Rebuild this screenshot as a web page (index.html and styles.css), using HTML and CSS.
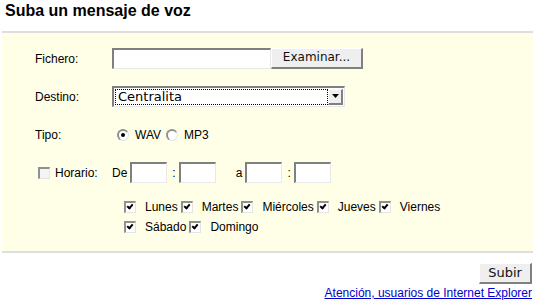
FILE: index.html
```html
<!DOCTYPE html>
<html lang="es">
<head>
    <meta charset="UTF-8">
    <title>Suba un mensaje de voz</title>
    <link rel="stylesheet" href="styles.css">
</head>
<body>
    <h1 class="title">Suba un mensaje de voz</h1>

    <div class="panel">
        <div class="row">
            <span class="label">Fichero:</span>
            <span class="field file"></span>
            <span class="btn">Examinar...</span>
        </div>

        <div class="row">
            <span class="label">Destino:</span>
            <div class="select">
                <span class="select-text">Centralita</span>
                <span class="select-arrow">
                    <svg width="9" height="5" viewBox="0 0 9 5"><path d="M1 0h7L4.5 4z" fill="#000"/></svg>
                </span>
            </div>
        </div>

        <div class="row">
            <span class="label">Tipo:</span>
            <div class="choices">
                <span class="radio on"></span><span class="opt">WAV</span>
                <span class="radio"></span><span class="opt">MP3</span>
            </div>
        </div>

        <div class="row">
            <span class="label label-check"><span class="check"></span>Horario:</span>
            <div class="times">
                <span class="word">De</span>
                <span class="field time"></span>
                <span class="sep">:</span>
                <span class="field time"></span>
                <span class="word word-a">a</span>
                <span class="field time"></span>
                <span class="sep">:</span>
                <span class="field time"></span>
            </div>
        </div>

        <div class="days">
            <span class="day"><span class="check on"></span>Lunes</span>
            <span class="day"><span class="check on"></span>Martes</span>
            <span class="day"><span class="check on"></span>Miércoles</span>
            <span class="day"><span class="check on"></span>Jueves</span>
            <span class="day"><span class="check on"></span>Viernes</span>
            <span class="day"><span class="check on"></span>Sábado</span>
            <span class="day"><span class="check on"></span>Domingo</span>
        </div>
    </div>

    <div class="actions">
        <span class="btn submit">Subir</span>
        <a href="#" class="ie-link">Atención, usuarios de Internet Explorer</a>
    </div>
</body>
</html>
```

FILE: styles.css
```css
body {
    margin: 0;
    background: #fff;
    font-family: "Liberation Sans", Arial, sans-serif;
    font-size: 12px;
    color: #000;
}

.title {
    margin: 0;
    padding: 2px 0 0 5px;
    height: 29px;
    font-size: 16px;
    font-weight: bold;
}

.panel {
    margin: 0 4px 0 2px;
    background: #ffffe8;
    border-top: 2px solid #dedede;
    border-bottom: 2px solid #dedede;
    padding: 15px 0 17px 0;
}

.row {
    display: flex;
    align-items: center;
    height: 21px;
    margin-bottom: 17px;
}

.label {
    width: 77px;
    padding-left: 33px;
    flex-shrink: 0;
}

.label-check {
    display: flex;
    align-items: center;
    width: 74px;
    padding-left: 36px;
}

.label-check .check {
    margin-right: 5px;
    background: #f4f4f4;
}

.field {
    display: inline-block;
    box-sizing: border-box;
    background: #fff;
    border-top: 2px solid #808080;
    border-left: 2px solid #808080;
    border-right: 1px solid #e8e8e8;
    border-bottom: 1px solid #e8e8e8;
}

.file {
    width: 159px;
    height: 21px;
}

.btn {
    display: inline-block;
    box-sizing: border-box;
    height: 21px;
    line-height: 17px;
    background: #efefef;
    border-top: 1px solid #fff;
    border-left: 1px solid #fff;
    border-right: 2px solid #808080;
    border-bottom: 2px solid #808080;
    font-family: "DejaVu Sans", Verdana, sans-serif;
    font-size: 12px;
    color: #111;
    text-align: center;
}

.row .btn {
    width: 92px;
}

.select {
    display: flex;
    box-sizing: border-box;
    width: 233px;
    height: 21px;
    background: #fff;
    border-top: 2px solid #808080;
    border-left: 2px solid #808080;
    border-right: 1px solid #e8e8e8;
    border-bottom: 1px solid #e8e8e8;
    padding: 1px;
}

.select-text {
    flex: 1;
    border: 1px dotted #000;
    font-family: "DejaVu Sans", Verdana, sans-serif;
    font-size: 13px;
    line-height: 14px;
    padding-left: 2px;
}

.select-arrow {
    display: flex;
    align-items: center;
    justify-content: center;
    box-sizing: border-box;
    width: 15px;
    background: #efefef;
    border-top: 1px solid #fff;
    border-left: 1px solid #fff;
    border-right: 2px solid #808080;
    border-bottom: 2px solid #808080;
}

.choices {
    display: flex;
    align-items: center;
    padding-left: 5px;
}

.radio {
    display: inline-block;
    box-sizing: border-box;
    width: 12px;
    height: 12px;
    border-radius: 50%;
    background: #fff;
    border-top: 2px solid #909090;
    border-left: 2px solid #909090;
    border-right: 1px solid #e4e4e4;
    border-bottom: 1px solid #e4e4e4;
    position: relative;
}

.radio.on::after {
    content: "";
    position: absolute;
    left: 2px;
    top: 2px;
    width: 4px;
    height: 4px;
    border-radius: 50%;
    background: #000;
}

.opt {
    margin: 0 5px 0 6px;
}

.times {
    display: flex;
    align-items: center;
}

.word {
    margin-right: 3px;
}

.word-a {
    margin-left: 20px;
}

.time {
    width: 37px;
    height: 21px;
}

.sep {
    margin: 0 3px 0 5px;
}

.check {
    display: inline-block;
    box-sizing: border-box;
    width: 12px;
    height: 12px;
    background: #fff;
    border-top: 2px solid #909090;
    border-left: 2px solid #909090;
    border-right: 1px solid #e4e4e4;
    border-bottom: 1px solid #e4e4e4;
    position: relative;
    flex-shrink: 0;
}

.check.on::after {
    content: "";
    position: absolute;
    left: 2px;
    top: 0px;
    width: 2px;
    height: 4px;
    border-right: 2px solid #000;
    border-bottom: 2px solid #000;
    transform: rotate(40deg);
}

.days {
    display: flex;
    flex-wrap: wrap;
    width: 360px;
    margin-left: 122px;
    row-gap: 6px;
    margin-top: 6px;
}

.day {
    display: flex;
    align-items: center;
    margin-right: 3px;
}

.day .check {
    margin-right: 9px;
}

.actions {
    display: flex;
    flex-direction: column;
    align-items: flex-end;
    padding: 10px 5px 0 0;
}

.submit {
    width: 53px;
    font-size: 13px;
    line-height: 18px;
}

.ie-link {
    margin-top: 2px;
    color: #0000cc;
    font-size: 12px;
}
```
